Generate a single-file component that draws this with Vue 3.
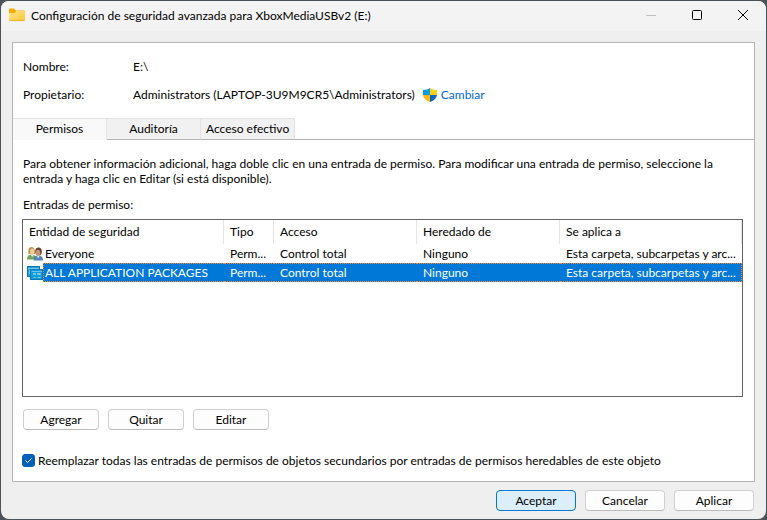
<template>
    <div class="desktop">
        <div class="window">
            <header class="titlebar">
                <svg class="folder" viewBox="0 0 16 14" width="16" height="14">
                    <defs>
                        <linearGradient id="folderFront" x1="0" y1="0" x2="1" y2="1">
                            <stop offset="0" stop-color="#ffe38a" />
                            <stop offset="1" stop-color="#ffc937" />
                        </linearGradient>
                    </defs>
                    <path d="M0 1.5Q0 .5 1 .5H5L7 2.5H15Q16 2.5 16 3.500V7H0Z" fill="#f5ae0c" />
                    <path d="M0 5H5.500L7.500 3H15Q16 3 16 4V12Q16 13 15 13H1Q0 13 0 12Z" fill="url(#folderFront)" />
                    <path d="M.5 12.600H15.500" stroke="#e9a820" stroke-width=".8" />
                </svg>
                <h1 class="title">Configuración de seguridad avanzada para XboxMediaUSBv2 (E:)</h1>
                <div class="controls">
                    <button type="button" class="control" aria-label="Minimizar" disabled>
                        <svg viewBox="0 0 12 12" width="12" height="12"><path d="M1 6.500H11" stroke="#c0c0c0" /></svg>
                    </button>
                    <button type="button" class="control" aria-label="Maximizar">
                        <svg viewBox="0 0 12 12" width="12" height="12">
                            <rect x="1.500" y="1.500" width="9" height="9" rx="1" fill="none" stroke="#000" />
                        </svg>
                    </button>
                    <button type="button" class="control" aria-label="Cerrar">
                        <svg viewBox="0 0 12 12" width="12" height="12"><path d="M1 1L11 11M11 1L1 11" stroke="#000" /></svg>
                    </button>
                </div>
            </header>

            <main class="panel">
                <dl class="info">
                    <div class="info-row">
                        <dt>Nombre:</dt>
                        <dd>E:\</dd>
                    </div>
                    <div class="info-row">
                        <dt>Propietario:</dt>
                        <dd>
                            <span>Administrators (LAPTOP-3U9M9CR5\Administrators)</span>
                            <a href="#" class="change" @click.prevent>
                                <svg viewBox="0 0 14 14" width="14" height="14">
                                    <path d="M7 0Q4.500 2 0 2V7H7Z" fill="#0c9be4" />
                                    <path d="M7 0Q9.500 2 14 2V7H7Z" fill="#ffd21c" />
                                    <path d="M0 7Q.5 11.500 7 14V7Z" fill="#fbb90f" />
                                    <path d="M14 7Q13.500 11.500 7 14V7Z" fill="#0b67b8" />
                                </svg>
                                <span>Cambiar</span>
                            </a>
                        </dd>
                    </div>
                </dl>

                <div class="tabs" role="tablist">
                    <button v-for="tab in tabs" :key="tab" type="button" role="tab" class="tab"
                        :class="{ active: tab === activeTab }" :aria-selected="tab === activeTab"
                        @click="activeTab = tab">{{ tab }}</button>
                    <span class="tabs-rest"></span>
                </div>

                <section class="content">
                    <p class="help">Para obtener información adicional, haga doble clic en una entrada de permiso. Para modificar una entrada de permiso, seleccione la entrada y haga clic en Editar (si está disponible).</p>
                    <p id="entries-label" class="entries-label">Entradas de permiso:</p>

                    <div class="list">
                        <table class="entries" aria-labelledby="entries-label">
                            <colgroup>
                                <col class="col-name">
                                <col class="col-type">
                                <col class="col-access">
                                <col class="col-access">
                                <col>
                            </colgroup>
                            <thead>
                                <tr>
                                    <th v-for="column in columns" :key="column" scope="col">{{ column }}</th>
                                </tr>
                            </thead>
                            <tbody>
                                <tr v-for="(entry, index) in entries" :key="entry.name"
                                    :class="{ selected: index === selected }" @click="selected = index">
                                    <td class="name">
                                        <div class="principal">
                                            <svg v-if="entry.icon === 'users'" viewBox="0 0 16 16" width="16" height="16">
                                                <path d="M0 13.500Q0 8.500 4.500 8.500T9 13.500Z" fill="#6fa65c" />
                                                <path d="M1.500 8Q.500 1 4.500 1Q8.500 1 8 8Z" fill="#b99242" />
                                                <ellipse cx="5.200" cy="5.600" rx="2.200" ry="3.200" fill="#efc8a0" />
                                                <path d="M3.500 8.500L5.200 11L7 8.500Z" fill="#eef3e8" />
                                                <path d="M6.500 14.500Q6.500 9.500 11.300 9.500T16 14.500Z" fill="#5583b5" />
                                                <ellipse cx="11.500" cy="5.500" rx="3.300" ry="4" fill="#5b4435" />
                                                <ellipse cx="11" cy="6.800" rx="2.300" ry="3" fill="#cf9270" />
                                                <path d="M9.800 9.700L11.200 12.500L12.600 9.700Z" fill="#f0f4fa" />
                                            </svg>
                                            <svg v-else viewBox="0 0 16 16" width="16" height="16">
                                                <rect x=".5" y="1.500" width="12" height="10" fill="#229bd8" stroke="#067ab8" />
                                                <path d="M1 3.500H12M2.500 5.500H4V9H2.500Z" fill="none" stroke="#78c9f0" />
                                                <rect x="3.500" y="4.500" width="12" height="10" fill="#159bda" stroke="#0879b5" />
                                                <path d="M4.500 6.500H15" stroke="#69bfe9" />
                                                <path d="M6.500 8.500H8.500V9.500H6.500ZM10.500 8.500H13.500V9.500H10.500ZM6.500 12.500H8.500M10.500 12.500H13.500" fill="none" stroke="#7dcdf2" />
                                            </svg>
                                            <span class="principal-name">{{ entry.name }}</span>
                                        </div>
                                    </td>
                                    <td>{{ entry.type }}</td>
                                    <td>{{ entry.access }}</td>
                                    <td>{{ entry.inherited }}</td>
                                    <td>{{ entry.applies }}</td>
                                </tr>
                            </tbody>
                        </table>
                    </div>

                    <div class="actions">
                        <button type="button" class="btn">Agregar</button>
                        <button type="button" class="btn">Quitar</button>
                        <button type="button" class="btn">Editar</button>
                    </div>

                    <label class="replace">
                        <input type="checkbox" v-model="replaceAll">
                        <span>Reemplazar todas las entradas de permisos de objetos secundarios por entradas de permisos heredables de este objeto</span>
                    </label>
                </section>
            </main>

            <footer class="footer">
                <button type="button" class="btn primary">Aceptar</button>
                <button type="button" class="btn">Cancelar</button>
                <button type="button" class="btn">Aplicar</button>
            </footer>
        </div>
    </div>
</template>

<script setup>
import { ref } from 'vue';

const tabs = ['Permisos', 'Auditoría', 'Acceso efectivo'];
const activeTab = ref('Permisos');

const columns = ['Entidad de seguridad', 'Tipo', 'Acceso', 'Heredado de', 'Se aplica a'];
const entries = [
    { name: 'Everyone', icon: 'users', type: 'Perm...', access: 'Control total', inherited: 'Ninguno', applies: 'Esta carpeta, subcarpetas y arc...' },
    { name: 'ALL APPLICATION PACKAGES', icon: 'packages', type: 'Perm...', access: 'Control total', inherited: 'Ninguno', applies: 'Esta carpeta, subcarpetas y arc...' },
];
const selected = ref(1);
const replaceAll = ref(true);
</script>

<style>
body {
    margin: 0;
    background: #4b5358;
}
</style>

<style scoped>
* {
    box-sizing: border-box;
    margin: 0;
    padding: 0;
}

.desktop {
    display: flex;
    min-height: 100vh;
    padding: 1px;
    background: #4b5358;
    font-family: Lato, 'Noto Sans', sans-serif;
    font-size: 12px;
    line-height: 15px;
    color: #000;
}

button {
    font: inherit;
    color: inherit;
}

.window {
    display: flex;
    flex: 1;
    flex-direction: column;
    min-width: 0;
    overflow: hidden;
    border-radius: 8px;
    background: #efefef;
}

.titlebar {
    display: flex;
    align-items: center;
    height: 30px;
    padding: 0 0 2px 8px;
    background: #f3f3f3;
}

.title {
    flex: 1;
    margin-left: 6px;
    font-size: 12px;
    font-weight: normal;
    white-space: nowrap;
}

.controls {
    display: flex;
}

.control {
    display: flex;
    align-items: center;
    justify-content: center;
    width: 46px;
    height: 28px;
    border: none;
    background: none;
}

.panel {
    display: flex;
    flex: 1;
    flex-direction: column;
    margin: 11px 11px 0;
    border: 1px solid #b4b4b4;
    background: #fff;
}

.info {
    display: flex;
    flex-direction: column;
    gap: 13px;
    padding: 16px 10px;
}

.info-row {
    display: flex;
}

.info-row dt {
    width: 110px;
}

.info-row dd {
    display: flex;
    gap: 8px;
    white-space: nowrap;
}

.change {
    display: flex;
    align-items: center;
    gap: 4px;
    color: #0068d6;
    text-decoration: none;
}

.tabs {
    display: flex;
    height: 22px;
}

.tab {
    min-width: 94px;
    padding: 0 5px 2px;
    border: 1px solid #e3e3e3;
    border-left: none;
    border-bottom-color: #b4b4b4;
    background: #f1f1f1;
    white-space: nowrap;
}

.tab.active {
    border-bottom-color: #f9f9f9;
    background: #f9f9f9;
}

.tabs-rest {
    flex: 1;
    border-bottom: 1px solid #b4b4b4;
}

.content {
    display: flex;
    flex: 1;
    flex-direction: column;
    padding: 16px 11px 13px 9px;
}

.help {
    padding-left: 1px;
}

.entries-label {
    margin-top: 11px;
    padding-left: 1px;
}

.list {
    flex: 1;
    margin-top: 7px;
    border: 1px solid #646464;
    background: #fff;
}

.entries {
    width: 100%;
    table-layout: fixed;
    border-collapse: separate;
    border-spacing: 0;
}

.col-name {
    width: 201px;
}

.col-type {
    width: 50px;
}

.col-access {
    width: 143px;
}

.entries th {
    height: 24px;
    padding: 0 0 2px 6px;
    border-right: 1px solid #e5e5e5;
    font-weight: normal;
    text-align: left;
}

.entries td {
    height: 19px;
    padding-left: 6px;
    white-space: nowrap;
}

.entries td.name {
    padding-left: 4px;
}

.principal {
    display: flex;
    align-items: center;
}

.principal-name {
    flex: 1;
    height: 19px;
    padding-left: 2px;
    line-height: 19px;
}

.selected td,
.selected .principal-name {
    border-top: 1px dotted #ff8728;
    border-bottom: 1px dotted #ff8728;
    background: #0078d7;
    color: #fff;
}

.selected td.name {
    border: none;
    background: none;
}

.selected .principal-name {
    padding-left: 1px;
    border-left: 1px dotted #ff8728;
    line-height: 17px;
}

.selected td:last-child {
    border-right: 1px dotted #ff8728;
}

.actions {
    display: flex;
    gap: 9px;
    margin-top: 12px;
    padding-left: 1px;
}

.btn {
    width: 76px;
    height: 21px;
    border: 1px solid #d0d0d0;
    border-bottom-color: #bcbcbc;
    border-radius: 4px;
    background: #fdfdfd;
}

.replace {
    display: flex;
    align-items: center;
    gap: 3px;
    margin-top: 23px;
    white-space: nowrap;
}

.replace input {
    width: 13px;
    height: 13px;
    appearance: none;
    border: 1px solid #868686;
    border-radius: 3px;
}

.replace input:checked {
    border-color: #005fb8;
    background: #005fb8 url("data:image/svg+xml,%3Csvg xmlns='http://www.w3.org/2000/svg' viewBox='0 0 11 11'%3E%3Cpath d='M2.500 5.500L4.500 7.500L8.500 3.500' fill='none' stroke='white'/%3E%3C/svg%3E") center / 11px no-repeat;
}

.footer {
    display: flex;
    justify-content: flex-end;
    gap: 9px;
    padding: 8px 12px;
}

.footer .btn {
    width: 80px;
}

.footer .primary {
    border-color: #0078d4;
    background: #dbeefa;
}
</style>
